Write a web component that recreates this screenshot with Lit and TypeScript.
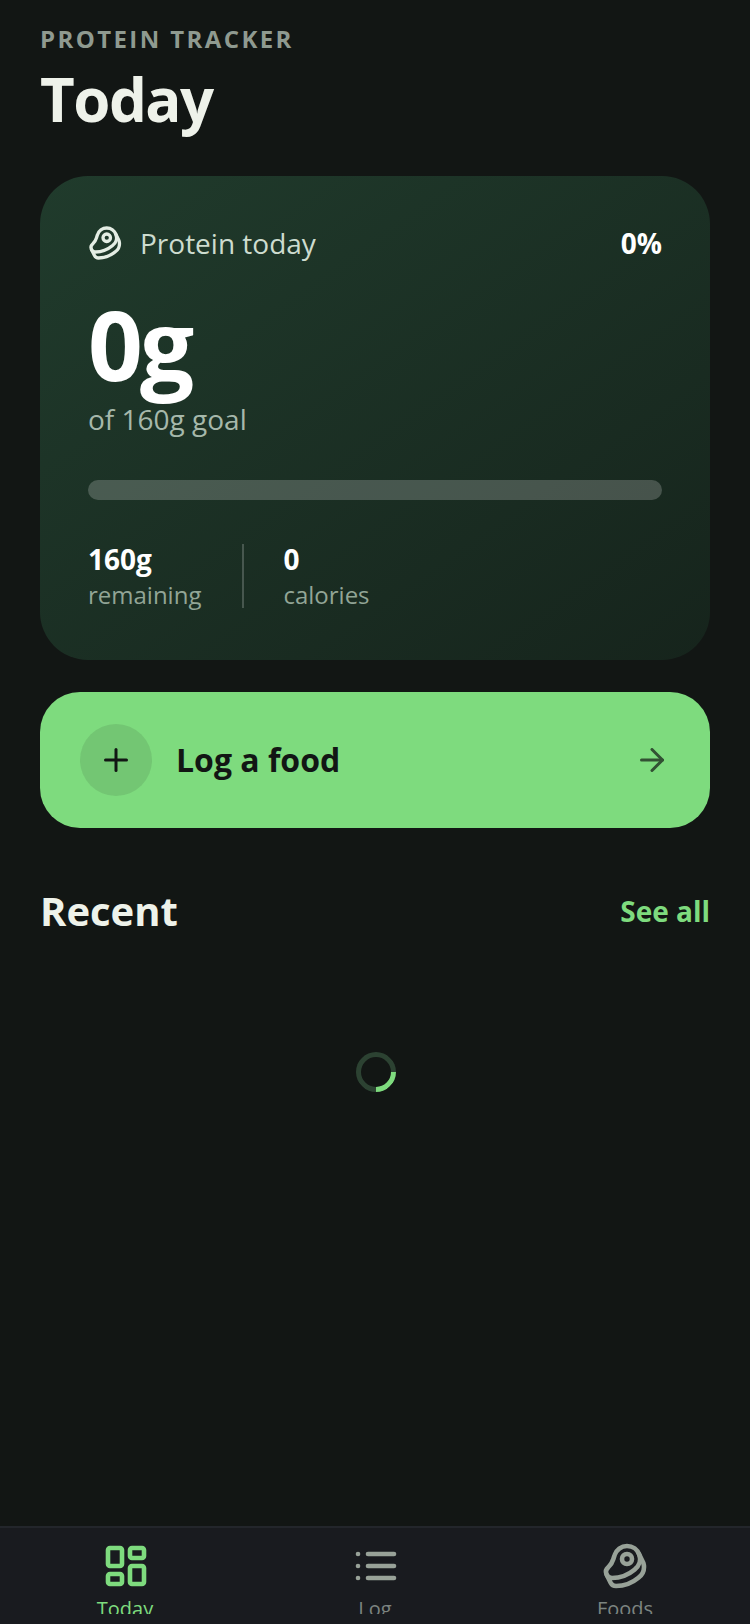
import { LitElement, html, css, svg } from 'lit';
import { customElement } from 'lit/decorators.js';

const beef = svg`<circle cx="12.5" cy="8.5" r="2.5"/><path d="M12.5 2a6.5 6.5 0 0 0-6.22 4.6c-1.1 3.13-.78 3.9-3.18 6.08A3 3 0 0 0 5 18c4 0 8.4-1.8 11.4-4.3A6.5 6.5 0 0 0 12.5 2Z"/><path d="m18.5 6 2.19 4.5a6.48 6.48 0 0 1 .31 2 6.49 6.49 0 0 1-2.6 5.2C15.4 20.2 11 22 7 22a3 3 0 0 1-2.68-1.66L2.4 16.5"/>`;
const dashboard = svg`<rect width="7" height="9" x="3" y="3" rx="1"/><rect width="7" height="5" x="14" y="3" rx="1"/><rect width="7" height="9" x="14" y="12" rx="1"/><rect width="7" height="5" x="3" y="16" rx="1"/>`;
const list = svg`<path d="M3 6h.01"/><path d="M3 12h.01"/><path d="M3 18h.01"/><path d="M8 6h13"/><path d="M8 12h13"/><path d="M8 18h13"/>`;
const plus = svg`<path d="M5 12h14"/><path d="M12 5v14"/>`;
const arrow = svg`<path d="M5 12h14"/><path d="m12 5 7 7-7 7"/>`;

const icon = (content: unknown, size: number, stroke = 2) => html`<svg width=${size} height=${size} viewBox="0 0 24 24" fill="none"
  stroke="currentColor" stroke-width=${stroke} stroke-linecap="round" stroke-linejoin="round">${content}</svg>`;

@customElement('app-root')
export class AppRoot extends LitElement {
  static styles = css`
    :host {
      display: block;
      font-family: 'Open Sans', sans-serif;
      color: #eef2ea;
    }
    .page {
      display: flex;
      flex-direction: column;
      height: 1624px;
      background: #121614;
      overflow: hidden;
    }
    .main {
      flex: 1;
      padding: 22px 40px 0;
      display: flex;
      flex-direction: column;
    }
    .eyebrow {
      font-size: 24px;
      line-height: 34px;
      font-weight: 700;
      letter-spacing: 2.4px;
      color: #8f9a90;
    }
    h1 {
      margin: 2px 0 0;
      font-size: 60px;
      line-height: 82px;
      font-weight: 700;
      letter-spacing: -1.5px;
    }
    .card {
      margin-top: 36px;
      height: 484px;
      box-sizing: border-box;
      padding: 48px;
      border-radius: 48px;
      background: linear-gradient(145deg, #203b2c 0%, #16241c 100%);
    }
    .card-head {
      display: flex;
      align-items: center;
      justify-content: space-between;
      height: 38px;
    }
    .card-title {
      display: flex;
      align-items: center;
      gap: 16px;
      font-size: 28px;
      color: #cddccf;
    }
    .card-title svg {
      color: #e4ede4;
    }
    .pct {
      font-size: 28px;
      font-weight: 700;
      color: #fff;
    }
    .big {
      margin-top: 30px;
      font-size: 96px;
      line-height: 104px;
      font-weight: 700;
      color: #fff;
      letter-spacing: -3px;
    }
    .goal {
      font-size: 28px;
      line-height: 38px;
      color: #a6b8ab;
      margin-top: 4px;
    }
    .bar {
      margin-top: 42px;
      height: 20px;
      border-radius: 10px;
      background: rgba(255, 255, 255, 0.2);
    }
    .stats {
      margin-top: 44px;
      display: flex;
      gap: 40px;
      height: 64px;
    }
    .stat-value {
      font-size: 28px;
      line-height: 30px;
      font-weight: 700;
      color: #fff;
    }
    .stat-label {
      margin-top: 4px;
      font-size: 24px;
      line-height: 34px;
      color: #92a596;
    }
    .divider {
      width: 2px;
      margin: 0 -1px 0 1px;
      background: rgba(255, 255, 255, 0.2);
    }
    .cta {
      margin-top: 32px;
      height: 136px;
      box-sizing: border-box;
      padding: 0 40px;
      border-radius: 40px;
      background: #7edb7e;
      color: #121614;
      display: flex;
      align-items: center;
      gap: 24px;
    }
    .cta-circle {
      width: 72px;
      height: 72px;
      border-radius: 50%;
      background: rgba(18, 22, 20, 0.1);
      display: flex;
      align-items: center;
      justify-content: center;
    }
    .cta-label {
      flex: 1;
      font-size: 32px;
      font-weight: 700;
      padding-bottom: 2px;
    }
    .cta-arrow {
      display: flex;
      opacity: 0.7;
    }
    .section-head {
      margin-top: 60px;
      display: flex;
      align-items: center;
      justify-content: space-between;
      height: 44px;
    }
    .section-head h2 {
      margin: 0;
      font-size: 40px;
      font-weight: 700;
    }
    .see-all {
      font-size: 28px;
      font-weight: 700;
      color: #7edb7e;
      padding-top: 2px;
    }
    .loading {
      display: flex;
      justify-content: center;
      margin-top: 120px;
      padding-left: 2px;
    }
    .spinner {
      width: 40px;
      height: 40px;
      box-sizing: border-box;
      border-radius: 50%;
      border: 5px solid #2c4232;
      border-right-color: #7edb7e;
      transform: rotate(45deg);
    }
    .nav {
      height: 98px;
      box-sizing: border-box;
      border-top: 2px solid #23262b;
      background: #191b1f;
      display: grid;
      grid-template-columns: repeat(3, 1fr);
    }
    .tab {
      height: 86px;
      box-sizing: border-box;
      padding-top: 14px;
      overflow: hidden;
      display: flex;
      flex-direction: column;
      align-items: center;
      color: #98a298;
    }
    .tab.active {
      color: #7edb7e;
    }
    .tab svg {
      flex: none;
      margin-left: 2px;
    }
    .tab span {
      font-size: 20px;
      line-height: 30px;
      color: #7c8480;
      margin-top: 4px;
    }
    .tab.active span {
      color: #7edb7e;
    }
  `;

  render() {
    return html`
      <div class="page">
        <div class="main">
          <div class="eyebrow">PROTEIN TRACKER</div>
          <h1>Today</h1>
          <section class="card">
            <div class="card-head">
              <div class="card-title">${icon(beef, 36, 2.2)}<span>Protein today</span></div>
              <div class="pct">0%</div>
            </div>
            <div class="big">0g</div>
            <div class="goal">of 160g goal</div>
            <div class="bar"></div>
            <div class="stats">
              <div>
                <div class="stat-value">160g</div>
                <div class="stat-label">remaining</div>
              </div>
              <div class="divider"></div>
              <div>
                <div class="stat-value">0</div>
                <div class="stat-label">calories</div>
              </div>
            </div>
          </section>
          <div class="cta">
            <div class="cta-circle">${icon(plus, 36)}</div>
            <div class="cta-label">Log a food</div>
            <div class="cta-arrow">${icon(arrow, 36)}</div>
          </div>
          <div class="section-head">
            <h2>Recent</h2>
            <div class="see-all">See all</div>
          </div>
          <div class="loading"><div class="spinner"></div></div>
        </div>
        <nav class="nav">
          <div class="tab active">${icon(dashboard, 48, 2.3)}<span>Today</span></div>
          <div class="tab">${icon(list, 48, 2.3)}<span>Log</span></div>
          <div class="tab">${icon(beef, 48, 2.3)}<span>Foods</span></div>
        </nav>
      </div>
    `;
  }
}
